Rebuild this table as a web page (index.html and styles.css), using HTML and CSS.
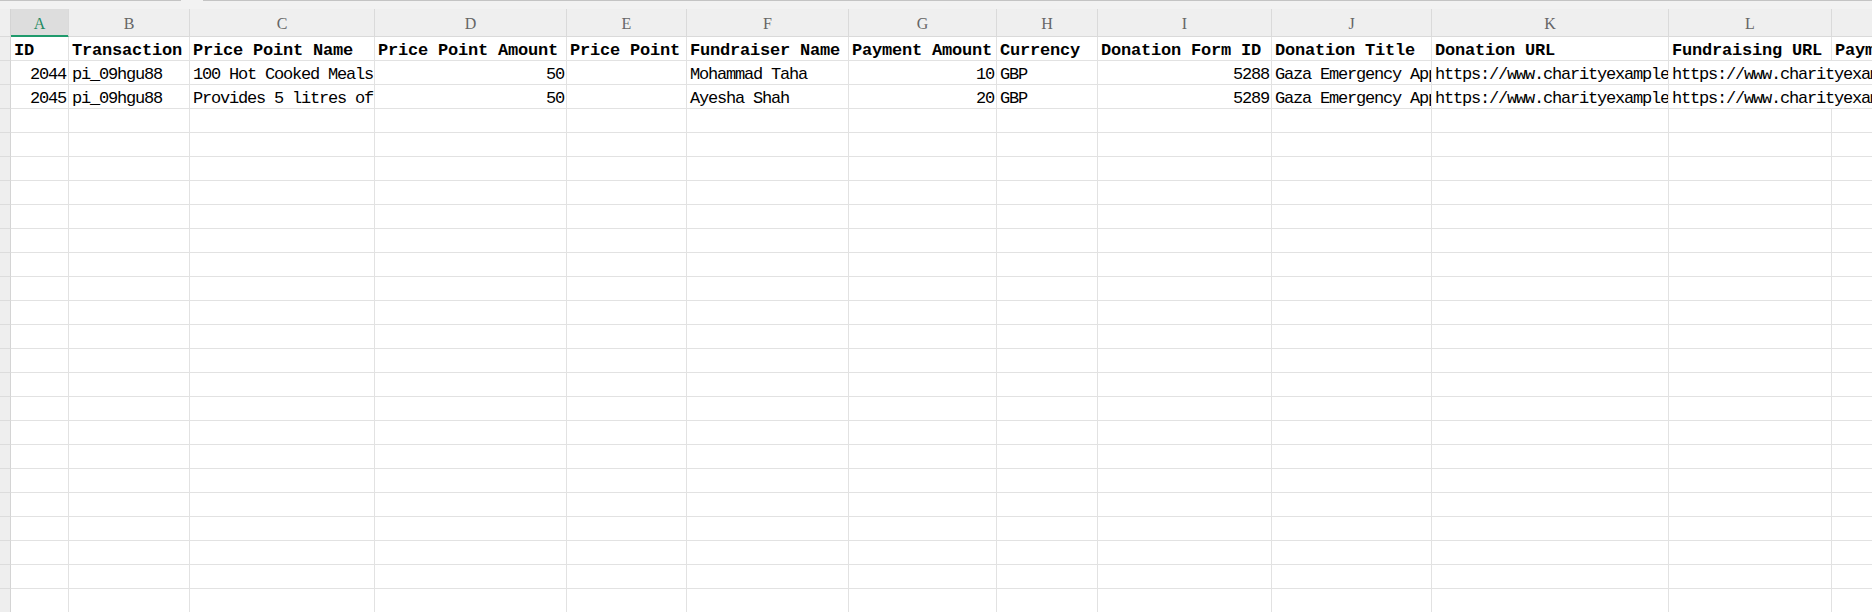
FILE: index.html
```html
<!DOCTYPE html>
<html>
<head>
<meta charset="utf-8">
<title>Sheet</title>
<link rel="stylesheet" href="styles.css">
</head>
<body>
<div class="sheet">
  <div class="topbar"><span class="seg seg1"></span><span class="gap"></span><span class="seg seg2"></span></div>
  <div class="grid">
    <div class="rh corner"></div><div class="ch sel">A</div><div class="ch">B</div><div class="ch">C</div><div class="ch">D</div><div class="ch">E</div><div class="ch">F</div><div class="ch">G</div><div class="ch">H</div><div class="ch">I</div><div class="ch">J</div><div class="ch">K</div><div class="ch">L</div><div class="ch">M</div>

    <div class="rh"></div><div class="c b">ID</div><div class="c b">Transaction ID</div><div class="c b">Price Point Name</div><div class="c b">Price Point Amount</div><div class="c b">Price Point ID</div><div class="c b">Fundraiser Name</div><div class="c b">Payment Amount</div><div class="c b">Currency</div><div class="c b">Donation Form ID</div><div class="c b">Donation Title</div><div class="c b">Donation URL</div><div class="c b">Fundraising URL</div><div class="c b">Payment Status</div>

    <div class="rh"></div><div class="c r">2044</div><div class="c">pi_09hgu88</div><div class="c">100 Hot Cooked Meals</div><div class="c r">50</div><div class="c"></div><div class="c">Mohammad Taha</div><div class="c r">10</div><div class="c">GBP</div><div class="c r">5288</div><div class="c">Gaza Emergency Appeal</div><div class="c">https://www.charityexample.org/donate/gaza-emergency-appeal</div><div class="c span2">https://www.charityexample.org/fundraise/mohammad-taha</div>

    <div class="rh"></div><div class="c r">2045</div><div class="c">pi_09hgu88</div><div class="c">Provides 5 litres of clean water</div><div class="c r">50</div><div class="c"></div><div class="c">Ayesha Shah</div><div class="c r">20</div><div class="c">GBP</div><div class="c r">5289</div><div class="c">Gaza Emergency Appeal</div><div class="c">https://www.charityexample.org/donate/gaza-emergency-appeal</div><div class="c span2">https://www.charityexample.org/fundraise/ayesha-shah</div>

    <div class="rh"></div><div class="c"></div><div class="c"></div><div class="c"></div><div class="c"></div><div class="c"></div><div class="c"></div><div class="c"></div><div class="c"></div><div class="c"></div><div class="c"></div><div class="c"></div><div class="c"></div><div class="c"></div>
    <div class="rh"></div><div class="c"></div><div class="c"></div><div class="c"></div><div class="c"></div><div class="c"></div><div class="c"></div><div class="c"></div><div class="c"></div><div class="c"></div><div class="c"></div><div class="c"></div><div class="c"></div><div class="c"></div>
    <div class="rh"></div><div class="c"></div><div class="c"></div><div class="c"></div><div class="c"></div><div class="c"></div><div class="c"></div><div class="c"></div><div class="c"></div><div class="c"></div><div class="c"></div><div class="c"></div><div class="c"></div><div class="c"></div>
    <div class="rh"></div><div class="c"></div><div class="c"></div><div class="c"></div><div class="c"></div><div class="c"></div><div class="c"></div><div class="c"></div><div class="c"></div><div class="c"></div><div class="c"></div><div class="c"></div><div class="c"></div><div class="c"></div>
    <div class="rh"></div><div class="c"></div><div class="c"></div><div class="c"></div><div class="c"></div><div class="c"></div><div class="c"></div><div class="c"></div><div class="c"></div><div class="c"></div><div class="c"></div><div class="c"></div><div class="c"></div><div class="c"></div>
    <div class="rh"></div><div class="c"></div><div class="c"></div><div class="c"></div><div class="c"></div><div class="c"></div><div class="c"></div><div class="c"></div><div class="c"></div><div class="c"></div><div class="c"></div><div class="c"></div><div class="c"></div><div class="c"></div>
    <div class="rh"></div><div class="c"></div><div class="c"></div><div class="c"></div><div class="c"></div><div class="c"></div><div class="c"></div><div class="c"></div><div class="c"></div><div class="c"></div><div class="c"></div><div class="c"></div><div class="c"></div><div class="c"></div>
    <div class="rh"></div><div class="c"></div><div class="c"></div><div class="c"></div><div class="c"></div><div class="c"></div><div class="c"></div><div class="c"></div><div class="c"></div><div class="c"></div><div class="c"></div><div class="c"></div><div class="c"></div><div class="c"></div>
    <div class="rh"></div><div class="c"></div><div class="c"></div><div class="c"></div><div class="c"></div><div class="c"></div><div class="c"></div><div class="c"></div><div class="c"></div><div class="c"></div><div class="c"></div><div class="c"></div><div class="c"></div><div class="c"></div>
    <div class="rh"></div><div class="c"></div><div class="c"></div><div class="c"></div><div class="c"></div><div class="c"></div><div class="c"></div><div class="c"></div><div class="c"></div><div class="c"></div><div class="c"></div><div class="c"></div><div class="c"></div><div class="c"></div>
    <div class="rh"></div><div class="c"></div><div class="c"></div><div class="c"></div><div class="c"></div><div class="c"></div><div class="c"></div><div class="c"></div><div class="c"></div><div class="c"></div><div class="c"></div><div class="c"></div><div class="c"></div><div class="c"></div>
    <div class="rh"></div><div class="c"></div><div class="c"></div><div class="c"></div><div class="c"></div><div class="c"></div><div class="c"></div><div class="c"></div><div class="c"></div><div class="c"></div><div class="c"></div><div class="c"></div><div class="c"></div><div class="c"></div>
    <div class="rh"></div><div class="c"></div><div class="c"></div><div class="c"></div><div class="c"></div><div class="c"></div><div class="c"></div><div class="c"></div><div class="c"></div><div class="c"></div><div class="c"></div><div class="c"></div><div class="c"></div><div class="c"></div>
    <div class="rh"></div><div class="c"></div><div class="c"></div><div class="c"></div><div class="c"></div><div class="c"></div><div class="c"></div><div class="c"></div><div class="c"></div><div class="c"></div><div class="c"></div><div class="c"></div><div class="c"></div><div class="c"></div>
    <div class="rh"></div><div class="c"></div><div class="c"></div><div class="c"></div><div class="c"></div><div class="c"></div><div class="c"></div><div class="c"></div><div class="c"></div><div class="c"></div><div class="c"></div><div class="c"></div><div class="c"></div><div class="c"></div>
    <div class="rh"></div><div class="c"></div><div class="c"></div><div class="c"></div><div class="c"></div><div class="c"></div><div class="c"></div><div class="c"></div><div class="c"></div><div class="c"></div><div class="c"></div><div class="c"></div><div class="c"></div><div class="c"></div>
    <div class="rh"></div><div class="c"></div><div class="c"></div><div class="c"></div><div class="c"></div><div class="c"></div><div class="c"></div><div class="c"></div><div class="c"></div><div class="c"></div><div class="c"></div><div class="c"></div><div class="c"></div><div class="c"></div>
    <div class="rh"></div><div class="c"></div><div class="c"></div><div class="c"></div><div class="c"></div><div class="c"></div><div class="c"></div><div class="c"></div><div class="c"></div><div class="c"></div><div class="c"></div><div class="c"></div><div class="c"></div><div class="c"></div>
    <div class="rh"></div><div class="c"></div><div class="c"></div><div class="c"></div><div class="c"></div><div class="c"></div><div class="c"></div><div class="c"></div><div class="c"></div><div class="c"></div><div class="c"></div><div class="c"></div><div class="c"></div><div class="c"></div>
    <div class="rh"></div><div class="c"></div><div class="c"></div><div class="c"></div><div class="c"></div><div class="c"></div><div class="c"></div><div class="c"></div><div class="c"></div><div class="c"></div><div class="c"></div><div class="c"></div><div class="c"></div><div class="c"></div>
    <div class="rh"></div><div class="c"></div><div class="c"></div><div class="c"></div><div class="c"></div><div class="c"></div><div class="c"></div><div class="c"></div><div class="c"></div><div class="c"></div><div class="c"></div><div class="c"></div><div class="c"></div><div class="c"></div>
    <div class="rh"></div><div class="c"></div><div class="c"></div><div class="c"></div><div class="c"></div><div class="c"></div><div class="c"></div><div class="c"></div><div class="c"></div><div class="c"></div><div class="c"></div><div class="c"></div><div class="c"></div><div class="c"></div>
  </div>
</div>
</body>
</html>
```

FILE: styles.css
```css
html, body {
  margin: 0;
  padding: 0;
  background: #ffffff;
  overflow: hidden;
}

.sheet {
  width: 1872px;
  height: 612px;
  overflow: hidden;
  background: #ffffff;
  font-family: "Liberation Mono", monospace;
}

.topbar {
  display: flex;
  height: 9px;
  background: #f2f2f2;
}

.topbar .seg {
  box-sizing: border-box;
  height: 9px;
  border-top: 1px solid #c4c4c4;
}

.topbar .seg1 {
  width: 181px;
}

.topbar .gap {
  width: 22px;
}

.topbar .seg2 {
  flex: 1;
}

.grid {
  display: grid;
  grid-template-columns: 11px 58px 121px 185px 192px 120px 162px 148px 101px 174px 160px 237px 163px 220px;
  grid-template-rows: 28px;
  grid-auto-rows: 24px;
}

.grid > div {
  box-sizing: border-box;
  border-right: 1px solid #e2e2e2;
  border-bottom: 1px solid #e2e2e2;
  overflow: hidden;
  white-space: nowrap;
}

.ch {
  background: #efefef;
  border-right-color: #dadada !important;
  border-bottom-color: #dadada !important;
  text-align: center;
  font-family: "Liberation Serif", serif;
  font-size: 16px;
  line-height: 18px;
  padding-top: 6px;
  color: #666666;
}

.ch.sel {
  background: #dddddd;
  color: #1d8a62;
  border-bottom-color: #1f9a6c !important;
  box-shadow: inset 0 -1px 0 #1f9a6c;
}

.rh {
  background: #eeeeee;
  border-right-color: #d4d4d4 !important;
  border-bottom-color: #dcdcdc !important;
}

.rh.corner {
  background: #efefef;
  border-bottom-color: #dadada !important;
}

.c {
  font-size: 17px;
  letter-spacing: -1.2px;
  line-height: 18px;
  padding: 5px 3px 0 3px;
  color: #000000;
}

.c.b {
  font-weight: bold;
  letter-spacing: -0.2px;
}

.c.r {
  text-align: right;
  padding-right: 2px;
}

.c.span2 {
  grid-column: span 2;
}
```
